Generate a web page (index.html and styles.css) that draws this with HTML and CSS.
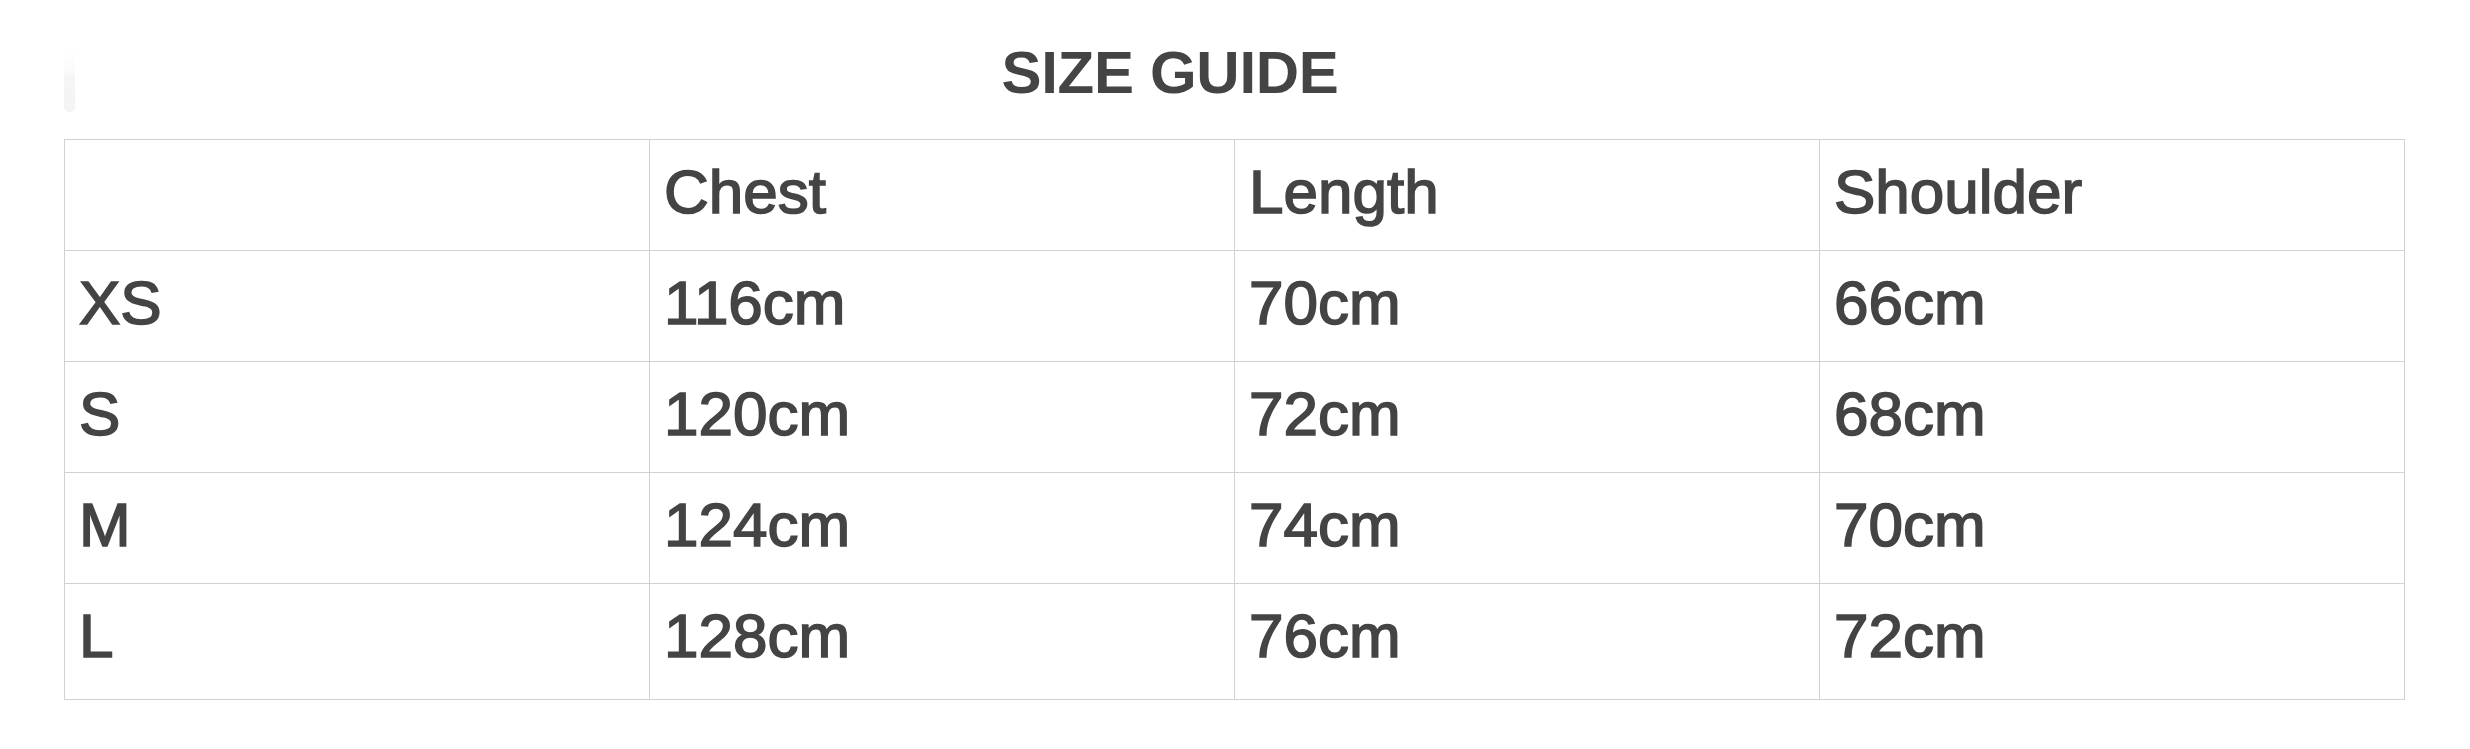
FILE: index.html
```html
<!DOCTYPE html>
<html lang="en">
<head>
<meta charset="utf-8">
<title>Size Guide</title>
<link rel="stylesheet" href="styles.css">
</head>
<body>
<div class="page">
  <header class="header">
    <span class="ghost-bar"></span>
    <h1 class="title">SIZE GUIDE</h1>
  </header>
  <table class="size-table">
    <thead>
      <tr><th></th><th>Chest</th><th>Length</th><th>Shoulder</th></tr>
    </thead>
    <tbody>
      <tr><td>XS</td><td>116cm</td><td>70cm</td><td>66cm</td></tr>
      <tr><td>S</td><td>120cm</td><td>72cm</td><td>68cm</td></tr>
      <tr><td>M</td><td>124cm</td><td>74cm</td><td>70cm</td></tr>
      <tr class="last"><td>L</td><td>128cm</td><td>76cm</td><td>72cm</td></tr>
    </tbody>
  </table>
</div>
</body>
</html>
```
FILE: styles.css
```css
html, body {
  margin: 0;
  padding: 0;
  background: #ffffff;
}
body {
  font-family: "Liberation Sans", Arial, sans-serif;
  color: #444444;
}
.page {
  padding: 0 66px 0 64px;
}
.header {
  position: relative;
  padding: 38px 128px 31px 0;
}
.ghost-bar {
  position: absolute;
  left: 0;
  top: 47px;
  width: 11px;
  height: 65px;
  border-radius: 0 0 6px 6px;
  background: linear-gradient(to bottom, rgba(248,248,248,0) 0%, rgba(248,248,248,0.6) 35%, #f5f5f5 50%, #f4f4f4 100%);
}
.title {
  margin: 0;
  text-align: center;
  font-size: 60px;
  line-height: 70px;
  font-weight: 700;
  letter-spacing: -0.3px;
  color: #444444;
}
.size-table {
  width: 2341px;
  border-collapse: collapse;
  table-layout: fixed;
}
.size-table th,
.size-table td {
  border: 1px solid #d2d2d2;
  padding: 17px 17px 23px 14px;
  font-size: 62px;
  line-height: 70px;
  font-weight: 400;
  text-align: left;
  vertical-align: top;
  color: #444444;
  -webkit-text-stroke: 1.6px #444444;
}
.size-table .last td {
  padding-bottom: 28px;
}
```
